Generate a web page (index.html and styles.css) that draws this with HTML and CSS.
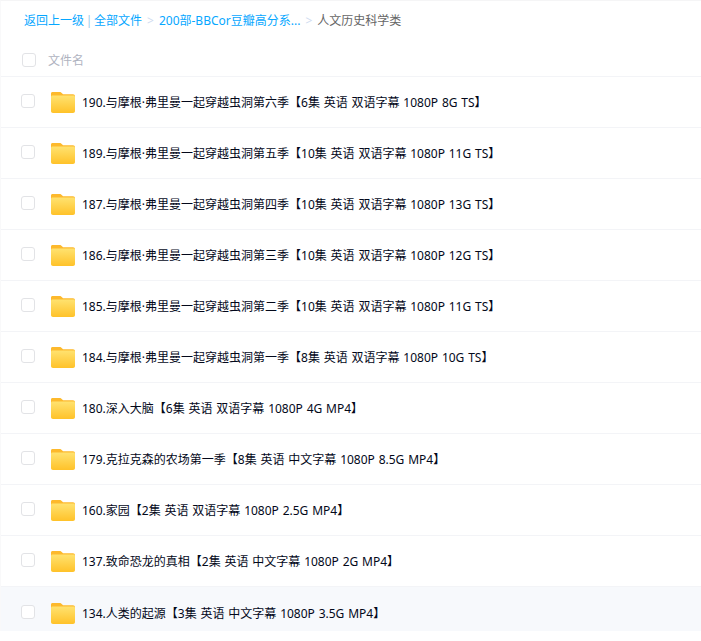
FILE: index.html
```html
<!DOCTYPE html>
<html lang="zh-CN">
<head>
    <meta charset="UTF-8">
    <meta name="viewport" content="width=device-width, initial-scale=1.0">
    <title>人文历史科学类</title>
    <link rel="stylesheet" href="styles.css">
</head>
<body>
    <svg class="icon-defs" width="0" height="0">
        <defs>
            <linearGradient id="folderFront" x1="0" y1="0" x2="0" y2="1">
                <stop offset="0" stop-color="#ffe26f"/>
                <stop offset="1" stop-color="#ffc229"/>
            </linearGradient>
            <symbol id="folder" viewBox="0 0 24 21">
                <path d="M1.5 0H8.5C9.6 0 10.2 .4 11 1.2L12 2.2H22C23.2 2.2 24 3 24 4.2V8H0V1.5C0 .6 .6 0 1.5 0Z" fill="#fdb92c"/>
                <path d="M1.5 3.6H22.5C23.4 3.6 24 4.2 24 5.1V19C24 20.2 23.2 21 22 21H2C.8 21 0 20.2 0 19V5.1C0 4.2 .6 3.6 1.5 3.6Z" fill="url(#folderFront)"/>
            </symbol>
        </defs>
    </svg>
    <div class="page">
        <div class="breadcrumb">
            <a href="#">返回上一级</a>
            <span class="sep">|</span>
            <a href="#">全部文件</a>
            <span class="arrow">&gt;</span>
            <a href="#">200部-BBCor豆瓣高分系...</a>
            <span class="arrow">&gt;</span>
            <span class="current">人文历史科学类</span>
        </div>
        <div class="list-head">
            <span class="check"></span>
            <span class="head-name">文件名</span>
        </div>
        <ul class="file-list">
            <li class="file-row"><span class="check"></span><svg class="folder"><use href="#folder"/></svg><span class="file-name">190.与摩根·弗里曼一起穿越虫洞第六季【6集 英语 双语字幕 1080P 8G TS】</span></li>
            <li class="file-row"><span class="check"></span><svg class="folder"><use href="#folder"/></svg><span class="file-name">189.与摩根·弗里曼一起穿越虫洞第五季【10集 英语 双语字幕 1080P 11G TS】</span></li>
            <li class="file-row"><span class="check"></span><svg class="folder"><use href="#folder"/></svg><span class="file-name">187.与摩根·弗里曼一起穿越虫洞第四季【10集 英语 双语字幕 1080P 13G TS】</span></li>
            <li class="file-row"><span class="check"></span><svg class="folder"><use href="#folder"/></svg><span class="file-name">186.与摩根·弗里曼一起穿越虫洞第三季【10集 英语 双语字幕 1080P 12G TS】</span></li>
            <li class="file-row"><span class="check"></span><svg class="folder"><use href="#folder"/></svg><span class="file-name">185.与摩根·弗里曼一起穿越虫洞第二季【10集 英语 双语字幕 1080P 11G TS】</span></li>
            <li class="file-row"><span class="check"></span><svg class="folder"><use href="#folder"/></svg><span class="file-name">184.与摩根·弗里曼一起穿越虫洞第一季【8集 英语 双语字幕 1080P 10G TS】</span></li>
            <li class="file-row"><span class="check"></span><svg class="folder"><use href="#folder"/></svg><span class="file-name">180.深入大脑【6集 英语 双语字幕 1080P 4G MP4】</span></li>
            <li class="file-row"><span class="check"></span><svg class="folder"><use href="#folder"/></svg><span class="file-name">179.克拉克森的农场第一季【8集 英语 中文字幕 1080P 8.5G MP4】</span></li>
            <li class="file-row"><span class="check"></span><svg class="folder"><use href="#folder"/></svg><span class="file-name">160.家园【2集 英语 双语字幕 1080P 2.5G MP4】</span></li>
            <li class="file-row"><span class="check"></span><svg class="folder"><use href="#folder"/></svg><span class="file-name">137.致命恐龙的真相【2集 英语 中文字幕 1080P 2G MP4】</span></li>
            <li class="file-row hover"><span class="check"></span><svg class="folder"><use href="#folder"/></svg><span class="file-name">134.人类的起源【3集 英语 中文字幕 1080P 3.5G MP4】</span></li>
        </ul>
    </div>
</body>
</html>
```

FILE: styles.css
```css
* {
    margin: 0;
    padding: 0;
    box-sizing: border-box;
}

html, body {
    height: 641px;
    overflow: hidden;
}

body {
    font-family: "Noto Sans", "Noto Sans CJK SC", sans-serif;
    background-color: #fff;
    color: #03081a;
}

.icon-defs {
    position: absolute;
}

.page {
    border-top: 1px solid #f5f5f6;
    border-left: 1px solid #f9f9fa;
}

.breadcrumb {
    display: flex;
    align-items: center;
    height: 38px;
    padding-left: 23px;
    font-size: 12px;
    white-space: pre;
    color: #06a7ff;
}

.breadcrumb a {
    color: #06a7ff;
    text-decoration: none;
}

.sep {
    margin: 0 1.7px;
    color: #9ccbea;
}

.arrow {
    margin: 0 5px;
    color: #d0dcf0;
}

.current {
    color: #666;
}

.list-head {
    display: flex;
    align-items: center;
    height: 38px;
    padding: 5px 0 0 21px;
    border-bottom: 1px solid #f3f4f7;
    font-size: 12px;
    color: #afb3bf;
}

.head-name {
    margin-left: 12px;
}

.check {
    display: block;
    flex: none;
    width: 14px;
    height: 14px;
    border: 1px solid #e2e3e6;
    border-radius: 3px;
    background: #fff;
}

.file-list {
    list-style: none;
}

.file-row {
    display: flex;
    align-items: center;
    height: 51px;
    padding-left: 20px;
    border-bottom: 1px solid #f3f4f7;
    font-size: 12px;
}

.file-row .check {
    margin-bottom: 2px;
}

.folder {
    flex: none;
    width: 24px;
    height: 21px;
    margin-left: 16px;
    margin-top: 1px;
}

.file-name {
    margin-left: 7px;
    white-space: nowrap;
    word-spacing: 0.7px;
}

/* highlight stops short of the row's full height */
.hover {
    height: 44px;
    padding-top: 7px;
    background-color: #f7f9fc;
    border-bottom: 0;
}
```
